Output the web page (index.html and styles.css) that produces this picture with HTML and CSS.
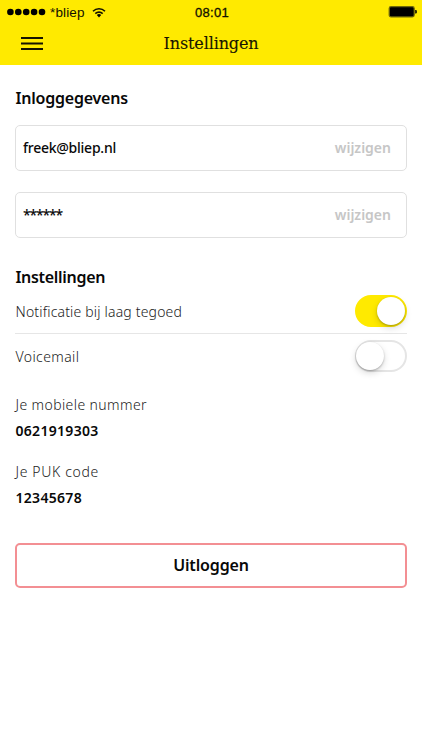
FILE: index.html
```html
<!DOCTYPE html>
<html lang="nl">
<head>
<meta charset="utf-8">
<title>Instellingen</title>
<link rel="stylesheet" href="styles.css">
</head>
<body>
<header class="header">
  <div class="status">
    <div class="carrier">
      <svg class="signal" width="39" height="8" viewBox="0 0 39 8"><circle cx="3.4" cy="4" r="3.3"/><circle cx="11.3" cy="4" r="3.3"/><circle cx="19.2" cy="4" r="3.3"/><circle cx="27.1" cy="4" r="3.3"/><circle cx="35" cy="4" r="3.3"/></svg>
      <span class="carrier-name">*bliep</span>
      <svg class="wifi" width="14" height="11" viewBox="0 0 14 11"><path d="M1 4.2a8.6 8.6 0 0 1 12 0M3.3 6.6a5.3 5.3 0 0 1 7.4 0" fill="none" stroke="#111000" stroke-width="1.6"/><path d="M4.8 8.1a3.2 3.2 0 0 1 4.4 0L7 10.4z"/></svg>
    </div>
    <time class="clock">08:01</time>
    <svg class="battery" width="29" height="12" viewBox="0 0 29 12"><rect x="1.2" y=".7" width="25" height="10.2" rx="1.8" fill="#000" stroke="#70690a" stroke-width="1.2"/><path d="M27.2 4h.6q1 0 1 1v1.6q0 1-1 1h-.6z"/></svg>
  </div>
  <div class="navbar">
    <svg class="menu" width="22" height="13" viewBox="0 0 22 13"><path d="M0 1h22M0 6.5h22M0 12h22" stroke="#151300" stroke-width="2"/></svg>
    <h1 class="title">Instellingen</h1>
  </div>
</header>
<main class="content">
  <h2 class="heading t-login">Inloggegevens</h2>
  <div class="field"><span class="value">freek@bliep.nl</span><span class="edit">wijzigen</span></div>
  <div class="field"><span class="value stars">******</span><span class="edit">wijzigen</span></div>
  <h2 class="heading second">Instellingen</h2>
  <div class="row first"><span class="label t-notif">Notificatie bij laag tegoed</span><span class="switch on"><span class="knob"></span></span></div>
  <div class="row"><span class="label">Voicemail</span><span class="switch"><span class="knob"></span></span></div>
  <dl class="details">
    <dt class="label">Je mobiele nummer</dt>
    <dd>0621919303</dd>
    <dt class="label t-puk">Je PUK code</dt>
    <dd>12345678</dd>
  </dl>
  <div class="logout">Uitloggen</div>
</main>
</body>
</html>
```
FILE: styles.css
```css
* { box-sizing: border-box; }
body { margin: 0; background: #fff; color: #080808; font-family: "Noto Sans", sans-serif; width: 422px; height: 750px; overflow: hidden; }
h1, h2, dl, dd { margin: 0; }
svg { display: block; }
.header { height: 65px; background: #ffea00; }
.status { height: 23px; display: grid; grid-template-columns: 1fr auto 1fr; align-items: center; padding: 0 5px 0 7px; font-family: "Liberation Sans", sans-serif; font-size: 13.5px; line-height: 23px; color: #111000; }
.carrier { display: flex; align-items: center; }
.carrier-name { margin-left: 4px; letter-spacing: .15px; padding-top: 1px; }
.wifi { margin-left: 7px; }
.clock { -webkit-text-stroke: .3px #111000; font-size: 13px; letter-spacing: .25px; }
.battery { justify-self: end; }
.navbar { height: 42px; display: grid; grid-template-columns: 22px 1fr 22px; align-items: center; padding: 0 21px 2px; }
.title { text-align: center; font-family: "DejaVu Serif", serif; font-size: 16px; font-weight: 400; line-height: 24px; letter-spacing: -.12px; color: #171500; -webkit-text-stroke: .12px #171500; padding-top: 1px; }
.content { padding: 21px 15px 0; }
.heading { padding-left: .5px; font-size: 16px; font-weight: 600; line-height: 24px; height: 24px; letter-spacing: -.3px; }
.t-login { letter-spacing: -.22px; }
.field { height: 46px; margin-top: 15px; border: 1px solid #e0e0e0; border-radius: 5px; display: flex; align-items: center; justify-content: space-between; padding: 0 15px 2px 7px; font-size: 14px; }
.field + .field { margin-top: 21px; }
.value { font-weight: 500; letter-spacing: -.25px; }
.stars { letter-spacing: -1.15px; }
.edit { font-weight: 600; color: #c6c6c6; }
.second { margin-top: 27px; }
.label { padding-left: .5px; font-size: 14px; font-weight: 300; color: #222; line-height: 20px; letter-spacing: .4px; }
.t-notif { letter-spacing: .18px; padding-top: 1px; }
.t-puk { letter-spacing: .65px; }
.row { height: 45px; display: flex; align-items: center; justify-content: space-between; }
.row.first { border-bottom: 1px solid #e6e6e6; }
.switch { width: 52px; height: 32px; border: 2px solid #e5e5e5; border-radius: 16px; display: flex; align-items: center; }
.switch.on { background: #ffea00; border-color: #ffea00; justify-content: flex-end; }
.row:not(.first) .switch { margin-top: -1px; }
.row:not(.first) .knob { margin-left: -1px; }
.knob { width: 28px; height: 28px; border-radius: 50%; background: #fff; box-shadow: 0 1px 2px rgba(0,0,0,.25), 0 3px 7px rgba(0,0,0,.15); }
.details { margin-top: 16px; }
.details dd { padding-left: .5px; font-size: 14px; font-weight: 600; line-height: 22px; margin: 5px 0 20px; letter-spacing: .3px; }
.logout { height: 45px; margin-top: 34px; border: 2px solid #f38f93; border-radius: 5px; text-align: center; font-size: 16px; font-weight: 600; line-height: 41px; letter-spacing: -.15px; }
```
